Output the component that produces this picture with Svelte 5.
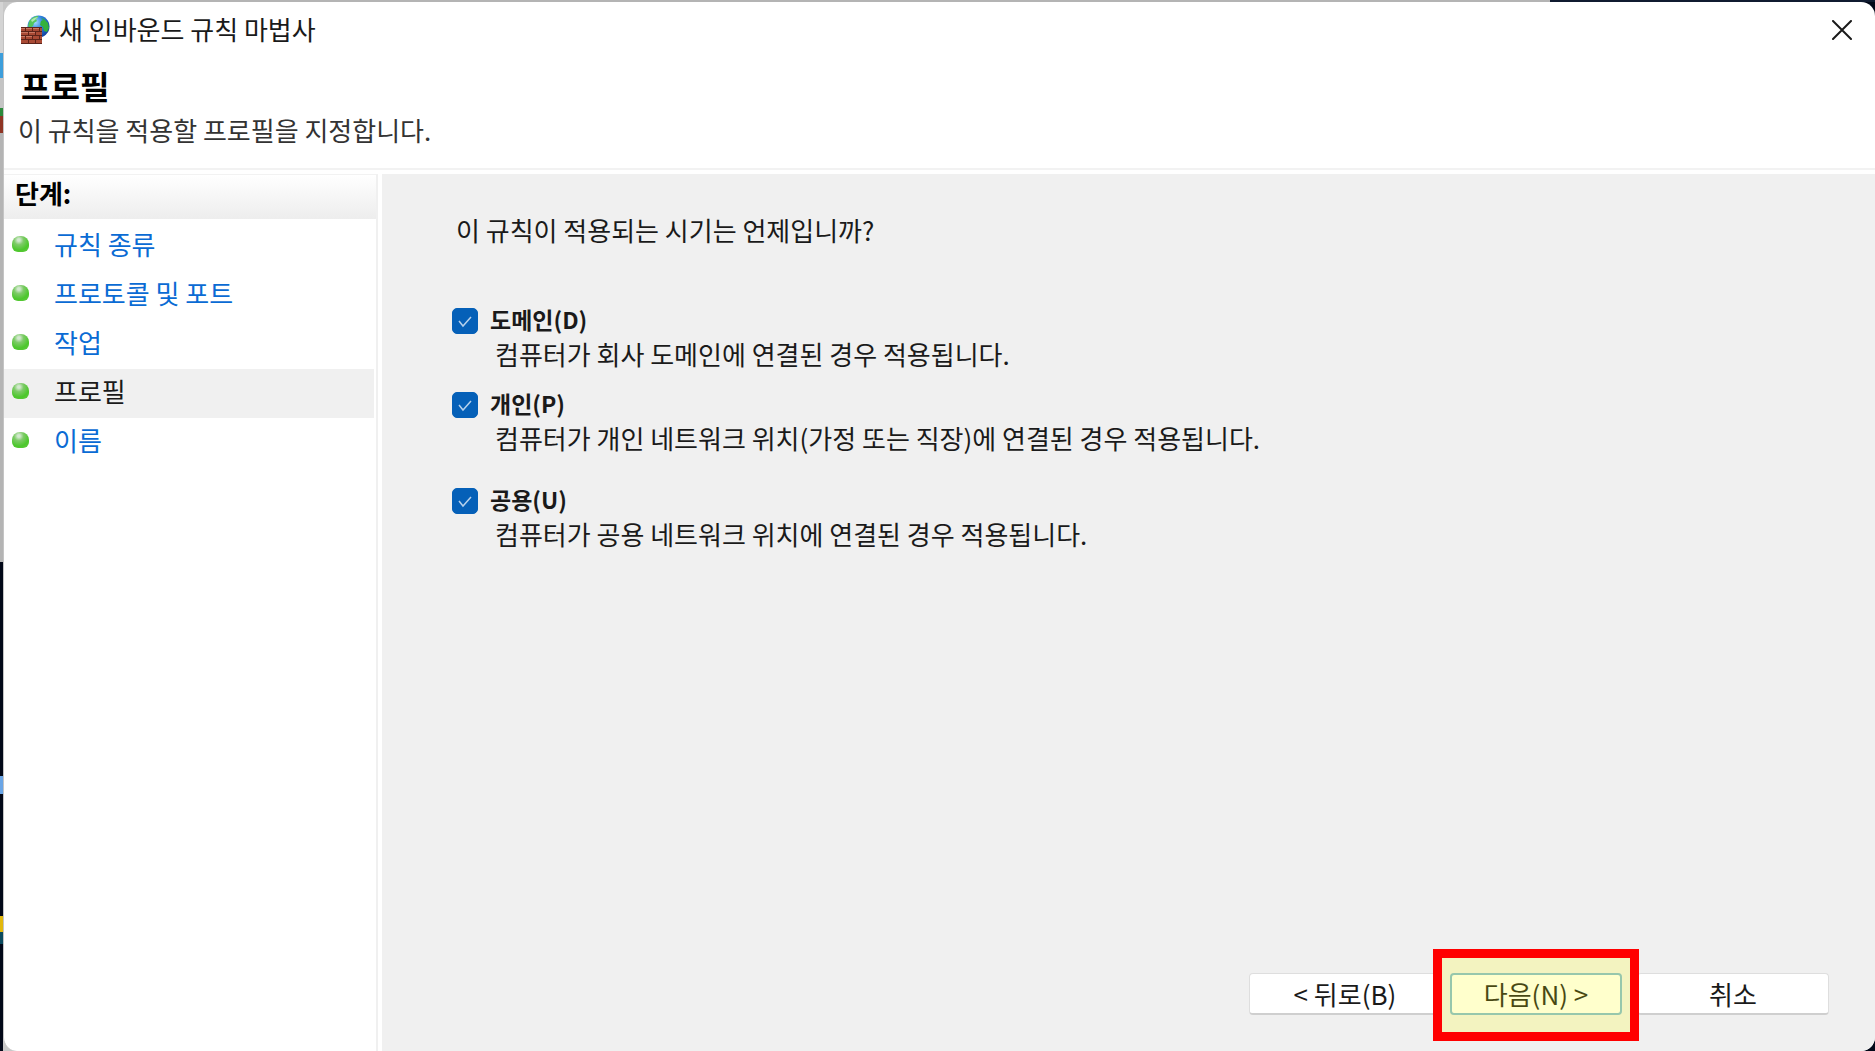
<script>
	let steps = [
		{ id: 'rule-type', label: '규칙 종류' },
		{ id: 'protocol', label: '프로토콜 및 포트' },
		{ id: 'action', label: '작업' },
		{ id: 'profile', label: '프로필' },
		{ id: 'name', label: '이름' }
	];

	let current = 'profile';

	let profiles = [
		{ id: 'domain', label: '도메인(D)', text: '컴퓨터가 회사 도메인에 연결된 경우 적용됩니다.', checked: true },
		{ id: 'private', label: '개인(P)', text: '컴퓨터가 개인 네트워크 위치(가정 또는 직장)에 연결된 경우 적용됩니다.', checked: true },
		{ id: 'public', label: '공용(U)', text: '컴퓨터가 공용 네트워크 위치에 연결된 경우 적용됩니다.', checked: true }
	];

	function move(offset) {
		const index = steps.findIndex(step => step.id === current) + offset;
		if (steps[index]) {
			current = steps[index].id;
		}
	}
</script>

<svelte:head>
	<title>새 인바운드 규칙 마법사</title>
</svelte:head>

<div class="desktop">
	<main class="window">
		<div class="titlebar">
			<svg class="app-icon" viewBox="0 0 30 30" aria-hidden="true">
				<defs>
					<radialGradient id="globe" cx="35%" cy="30%" r="75%">
						<stop offset="0" stop-color="#a9dcff" />
						<stop offset="0.45" stop-color="#2f86e0" />
						<stop offset="1" stop-color="#123f9c" />
					</radialGradient>
				</defs>
				<circle cx="18.5" cy="11.5" r="11" fill="url(#globe)" />
				<path d="M9 7c2-4 6-6 9-6 1 1-1 2-2 3l1 2-3 2-1 3-3 2-2-2z" fill="#53c65c" />
				<path d="M21 3l3 1 4 4 1 5-2 4-3-1-1-4-3-2 1-4 2-1z" fill="#35b13c" />
				<path d="M11 5c2-2 5-3 7-3l-3 3-3 2z" fill="#d5f7d2" opacity="0.7" />
				<path d="M1 12h21v17H1z" fill="#5d241a" />
				<path
					d="M1 13h4v3H1zM6 13h6v3H6zM13 13h6v3h-6zM20 13h2v3h-2zM1 17h7v3H1zM9 17h6v3H9zM16 17h6v3h-6zM1 21h4v3H1zM6 21h6v3H6zM13 21h6v3h-6zM20 21h2v3h-2zM1 25h7v3H1zM9 25h6v3H9zM16 25h6v3h-6z"
					fill="#a94a35"
				/>
				<path d="M1 13h4v1H1zM6 13h6v1H6zM13 13h6v1h-6zM1 17h7v1H1zM9 17h6v1H9zM1 21h4v1H1zM6 21h6v1H6z" fill="#c97862" />
			</svg>
			<span class="caption">새 인바운드 규칙 마법사</span>
			<button class="close" type="button" aria-label="닫기">
				<svg viewBox="0 0 20 20" aria-hidden="true">
					<path d="M1 1l18 18M19 1L1 19" fill="none" stroke="#1a1a1a" stroke-width="2" stroke-linecap="round" />
				</svg>
			</button>
		</div>

		<header>
			<h1>프로필</h1>
			<p>이 규칙을 적용할 프로필을 지정합니다.</p>
		</header>

		<div class="body">
			<nav>
				<h2>단계:</h2>
				<ul>
					{#each steps as step}
						<li class:active={step.id === current}>
							<span class="bullet"></span>
							{#if step.id === current}
								<span aria-current="step">{step.label}</span>
							{:else}
								<a href="#{step.id}" on:click|preventDefault={() => (current = step.id)}>{step.label}</a>
							{/if}
						</li>
					{/each}
				</ul>
			</nav>

			<section class="content">
				<p class="question">이 규칙이 적용되는 시기는 언제입니까?</p>

				<div class="profiles">
					{#each profiles as profile}
						<div class="profile {profile.id}">
							<input type="checkbox" id={profile.id} bind:checked={profile.checked} aria-describedby="{profile.id}-text" />
							<label for={profile.id}>{profile.label}</label>
							<p id="{profile.id}-text">{profile.text}</p>
						</div>
					{/each}
				</div>

				<footer>
					<button class="btn" type="button" on:click={() => move(-1)}>&lt; 뒤로(B)</button>
					<div class="next">
						<button class="btn primary" type="button" on:click={() => move(1)}>다음(N) &gt;</button>
						<span class="marker"></span>
					</div>
					<button class="btn cancel" type="button">취소</button>
				</footer>
			</section>
		</div>
	</main>
</div>

<style>
	:global(body) {
		margin: 0;
		font-family: 'Noto Sans CJK KR', sans-serif;
		font-size: 26px;
		line-height: 32px;
		color: #1a1a1a;
	}

	h1, h2, p, ul {
		margin: 0;
		padding: 0;
	}

	/* strip of the desktop that stays visible round the window */
	.desktop {
		box-sizing: border-box;
		display: flex;
		min-height: 100vh;
		padding: 2px 0 0 3px;
		background:
			linear-gradient(90deg, #b4b4b4 1550px, #101b30 1550px) top / 100% 2px no-repeat,
			linear-gradient(
				#d4d4d4 53px, #3d9edb 53px, #3d9edb 78px, #c4c4c4 78px, #c4c4c4 108px,
				#2b8a3c 108px, #2b8a3c 116px, #8f3524 116px, #8f3524 133px, #b4b4b4 133px,
				#b4b4b4 562px, #020818 562px, #020818 776px, #6aa5e6 776px, #6aa5e6 794px,
				#020818 794px, #020818 916px, #e2b80c 916px, #e2b80c 932px, #0b4a5e 932px,
				#0b4a5e 944px, #020818 944px
			) left / 3px 100% no-repeat,
			linear-gradient(90deg, #c8c8c8 50%, #020818 50%);
	}

	.window {
		flex: 1;
		display: flex;
		flex-direction: column;
		overflow: hidden;
		background: #fff;
		border-left: 1px solid #c4c4c4;
		border-radius: 14px;
		box-sizing: border-box;
	}

	.titlebar {
		display: flex;
		align-items: center;
		height: 56px;
		padding: 0 13px 0 16px;
	}

	.app-icon {
		width: 30px;
		height: 30px;
	}

	.caption {
		flex: 1;
		padding-bottom: 3px;
		margin-left: 9px;
	}

	.close {
		display: flex;
		align-items: center;
		justify-content: center;
		width: 40px;
		height: 40px;
		padding: 0;
		border: 0;
		background: none;
	}

	.close svg {
		width: 20px;
		height: 20px;
	}

	header {
		padding: 7px 14px 22px;
		border-bottom: 2px solid #f2f2f2;
	}

	h1 {
		padding-left: 3px;
		font-size: 32px;
		line-height: 40px;
		color: #000;
	}

	header p {
		padding-top: 9px;
		color: #333;
	}

	.body {
		flex: 1;
		display: flex;
		gap: 4px;
		padding-top: 4px;
	}

	nav {
		box-sizing: border-box;
		flex: 0 0 374px;
		border-top: 1px solid #f2f2f2;
		border-right: 2px solid #f0f0f0;
	}

	h2 {
		height: 44px;
		padding-left: 11px;
		font-size: 26px;
		line-height: 36px;
		color: #000;
		background: linear-gradient(#fff, #ededed);
	}

	ul {
		padding-top: 3px;
		list-style: none;
	}

	li {
		box-sizing: border-box;
		display: flex;
		align-items: center;
		gap: 25px;
		height: 49px;
		margin-right: 2px;
		padding: 0 0 5px 8px;
	}

	li.active {
		background: #f0f0f0;
	}

	.bullet {
		width: 17px;
		height: 16px;
		border-radius: 8px 8px 6px 6px;
		background: radial-gradient(circle at 40% 25%, #d2e8ce 8%, #7ecb68 30%, #4cc72c 65%, #67c944);
	}

	a {
		color: #0a6bd4;
		text-decoration: none;
	}

	.content {
		flex: 1;
		display: flex;
		flex-direction: column;
		padding: 40px 46px 36px 70px;
		background: #f0f0f0;
	}

	.question {
		padding-left: 4px;
	}

	.profiles {
		flex: 1;
		padding-top: 58px;
	}

	.profile {
		display: grid;
		grid-template-columns: 26px 1fr;
		column-gap: 12px;
		align-items: center;
		margin-bottom: 18px;
	}

	.profile.private {
		margin-bottom: 30px;
	}

	input {
		appearance: none;
		width: 26px;
		height: 26px;
		margin: 0;
		border: 1px solid #8a8a8a;
		border-radius: 5px;
		background: #fff;
	}

	input:checked {
		border-color: #0560b8;
		background: #0560b8 url("data:image/svg+xml,%3Csvg xmlns='http://www.w3.org/2000/svg' viewBox='0 0 24 24'%3E%3Cpath d='M6 12l4 5 8-9' fill='none' stroke='%23b4d0ec' stroke-width='1.5'/%3E%3C/svg%3E");
	}

	label {
		justify-self: start;
		padding-bottom: 4px;
		font-size: 23px;
		line-height: 30px;
		font-weight: bold;
	}

	.profile p {
		grid-column: 2;
		padding-left: 5px;
	}

	footer {
		display: flex;
		justify-content: flex-end;
		gap: 9px;
	}

	.btn {
		box-sizing: border-box;
		width: 192px;
		height: 42px;
		padding: 0;
		border: 1px solid #dedede;
		border-bottom: 2px solid #cfcfcf;
		border-radius: 4px;
		background: #fff;
		color: #1a1a1a;
		font-family: inherit;
		font-size: 26px;
		line-height: 32px;
	}

	.btn.primary {
		width: 172px;
		border: 2px solid #7db9d8;
	}

	.btn.cancel {
		margin-left: 6px;
	}

	.next {
		position: relative;
	}

	/* red frame lies over the button and its neighbours */
	.marker {
		position: absolute;
		inset: -24px -17px -26px;
		border: 9px solid #f00;
		background: rgba(255, 255, 0, 0.2);
		background-clip: padding-box;
		pointer-events: none;
		z-index: 1;
	}
</style>
